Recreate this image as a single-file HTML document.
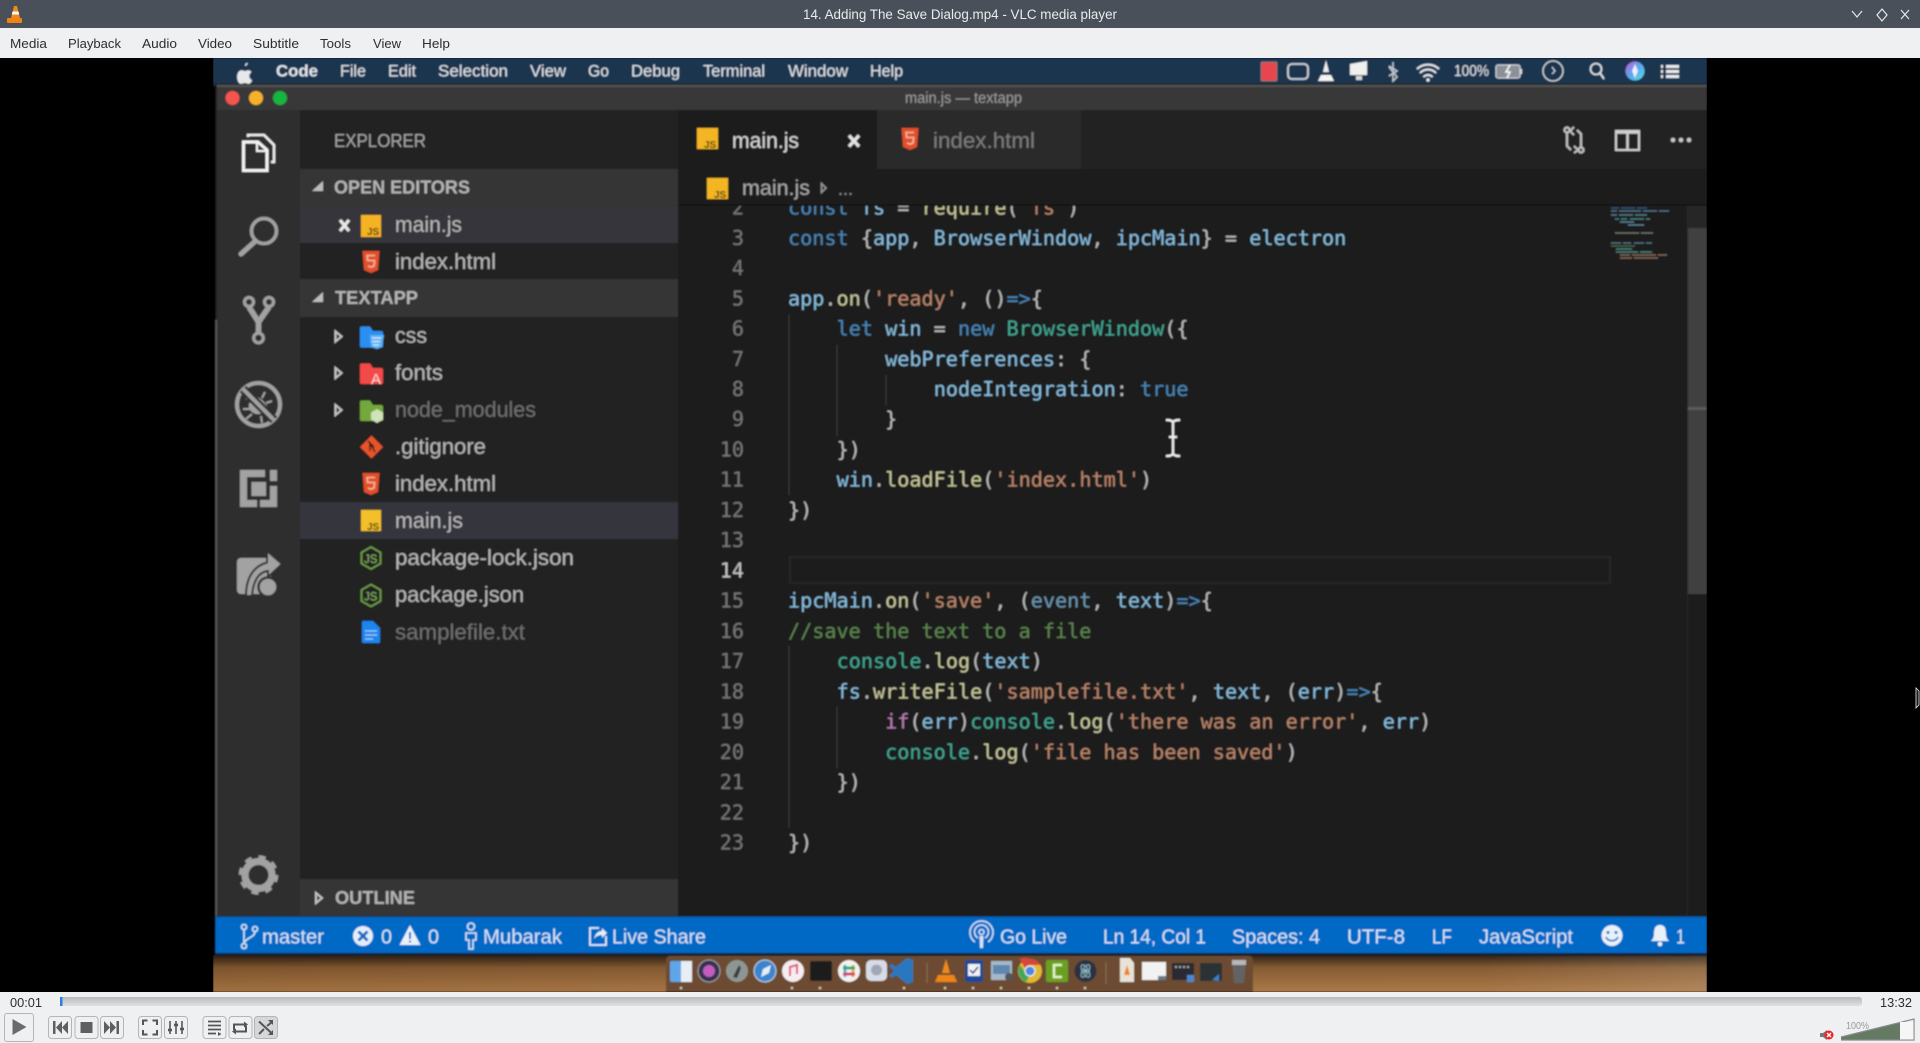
<!DOCTYPE html>
<html lang="en"><head><meta charset="utf-8"><title>14. Adding The Save Dialog.mp4 - VLC media player</title>
<style>
html,body{margin:0;padding:0;background:#000;overflow:hidden}
svg{display:block;position:absolute;left:0;top:0}
text{font-family:"Liberation Sans",sans-serif;white-space:pre}
.code text,.code{font-family:"DejaVu Sans Mono","Liberation Mono",monospace;font-size:20.16px}
.k{fill:#4a86b8}.v{fill:#88bedf}.p{fill:#bcbcbc}.m{fill:#c8c89c}.s{fill:#bb866c}.c{fill:#5c8650}.t{fill:#42a894}.f{fill:#b97fb5}.d{fill:#6a97b0}
.n{fill:#767676;text-anchor:end}
.side{font-size:22.4px;fill:#b8b8b8}
.dim{font-size:22.4px;fill:#707070}
.sb{font-size:20px;fill:#d5e6f7}
.mac{font-size:17px;fill:#e2e6ec}
.vm{font-size:13px;fill:#2a2e32}
.hd{font-size:18px;font-weight:bold;fill:#b4b4b4}
</style></head><body>
<svg width="1920" height="1043" viewBox="0 0 1920 1043" xmlns="http://www.w3.org/2000/svg">
<defs>
<filter id="b" filterUnits="userSpaceOnUse" x="213" y="58" width="1494" height="934"><feGaussianBlur stdDeviation="0.7"/></filter>
<clipPath id="vid"><rect x="213" y="58" width="1494" height="934"/></clipPath>
<clipPath id="ed"><rect x="678" y="206" width="1009" height="711"/></clipPath>
<linearGradient id="wall" x1="0" y1="0" x2="0" y2="1"><stop offset="0" stop-color="#2b1c10"/><stop offset=".35" stop-color="#84592f"/><stop offset="1" stop-color="#aa7644"/></linearGradient>
<linearGradient id="wallr" x1="0" y1="0" x2="1" y2="0"><stop offset="0" stop-color="#000" stop-opacity=".05"/><stop offset=".85" stop-color="#fff" stop-opacity=".02"/><stop offset="1" stop-color="#fff" stop-opacity=".13"/></linearGradient>
<linearGradient id="sl" x1="0" y1="0" x2="0" y2="1"><stop offset="0" stop-color="#b9babc"/><stop offset="1" stop-color="#dfe0e2"/></linearGradient>
<linearGradient id="siri" x1="0" y1="0" x2="1" y2="1"><stop offset="0" stop-color="#c55bd0"/><stop offset=".5" stop-color="#5aa8ef"/><stop offset="1" stop-color="#5ae0e0"/></linearGradient>
<symbol id="h5" viewBox="-10 -12 20 24" overflow="visible"><path d="M-8.5-11H8.5L7 8 0 11-7 8Z" fill="#e2502a"/><path d="M4-6.5H-3.8L-3.4-1.5H3.6L3 4 0 5.2-3 4" fill="none" stroke="#f0b8a0" stroke-width="1.6"/></symbol>
</defs>

<!-- VLC chrome -->
<rect x="0" y="0" width="1920" height="28" fill="#4a5059"/>
<rect x="0" y="28" width="1920" height="30" fill="#eff0f1"/>
<rect x="0" y="58" width="1920" height="934" fill="#000"/>
<path d="M14 6 17 6 20 18H11Z" fill="#f08a1c"/><path d="M12.6 11.5h5.8l.8 3H11.8Z" fill="#fff"/><rect x="7" y="18" width="15" height="5" rx="1" fill="#ef8414"/>
<text x="803" y="19" font-size="13.5" fill="#e9ebee" textLength="314" lengthAdjust="spacingAndGlyphs">14. Adding The Save Dialog.mp4 - VLC media player</text>
<path d="M1852 11l5 6 5-6" fill="none" stroke="#e6e8ea" stroke-width="1.2"/>
<path d="M1882 9l5 6-5 6-5-6Z" fill="none" stroke="#e6e8ea" stroke-width="1.2"/>
<path d="M1901 10l8 9M1909 10l-8 9" fill="none" stroke="#e6e8ea" stroke-width="1.2"/>
<g class="vmg">
<text class="vm" x="10" y="48" textLength="37" lengthAdjust="spacingAndGlyphs">Media</text>
<text class="vm" x="68" y="48" textLength="53" lengthAdjust="spacingAndGlyphs">Playback</text>
<text class="vm" x="142" y="48" textLength="35" lengthAdjust="spacingAndGlyphs">Audio</text>
<text class="vm" x="198" y="48" textLength="34" lengthAdjust="spacingAndGlyphs">Video</text>
<text class="vm" x="253" y="48" textLength="46" lengthAdjust="spacingAndGlyphs">Subtitle</text>
<text class="vm" x="320" y="48" textLength="31" lengthAdjust="spacingAndGlyphs">Tools</text>
<text class="vm" x="373" y="48" textLength="28" lengthAdjust="spacingAndGlyphs">View</text>
<text class="vm" x="422" y="48" textLength="28" lengthAdjust="spacingAndGlyphs">Help</text>
</g>

<!-- video -->
<g clip-path="url(#vid)"><g filter="url(#b)">
<rect x="213" y="58" width="1494" height="27" fill="#1e3550"/>
<rect x="213" y="83" width="1494" height="3" fill="#222a33"/>
<rect x="213" y="955" width="1494" height="37" fill="url(#wall)"/>
<rect x="213" y="955" width="1494" height="37" fill="url(#wallr)"/>
<!-- mac menu -->
<path d="M245 66c1.500-.2 2.500-1.300 2.700-3.200-1.600.2-2.800 1.400-2.700 3.200zm-6 17c-2-2.500-2.800-8-.5-11 1.500-1.900 3.600-2.200 5.200-1.200 1 .4 1.500.4 2.500 0 2-1 4-.5 5.300 1.300-3.300 2-2.800 6.700.6 8.100-.8 2-1.700 3-2.800 3.500-1.200.4-2 0-3-.4-1-.4-1.800-.4-2.800 0-1.800.8-3 .7-4.500-.3z" fill="#e8e8ea"/>
<text class="mac" x="276" y="76.500" font-weight="bold" textLength="42" lengthAdjust="spacingAndGlyphs">Code</text>
<text class="mac" x="340" y="76.500" textLength="26" lengthAdjust="spacingAndGlyphs">File</text>
<text class="mac" x="388" y="76.500" textLength="28" lengthAdjust="spacingAndGlyphs">Edit</text>
<text class="mac" x="438" y="76.500" textLength="70" lengthAdjust="spacingAndGlyphs">Selection</text>
<text class="mac" x="530" y="76.500" textLength="36" lengthAdjust="spacingAndGlyphs">View</text>
<text class="mac" x="588" y="76.500" textLength="21" lengthAdjust="spacingAndGlyphs">Go</text>
<text class="mac" x="631" y="76.500" textLength="49" lengthAdjust="spacingAndGlyphs">Debug</text>
<text class="mac" x="703" y="76.500" textLength="62" lengthAdjust="spacingAndGlyphs">Terminal</text>
<text class="mac" x="788" y="76.500" textLength="60" lengthAdjust="spacingAndGlyphs">Window</text>
<text class="mac" x="870" y="76.500" textLength="33" lengthAdjust="spacingAndGlyphs">Help</text>
<!-- mac right -->
<rect x="1261" y="62" width="16" height="19" rx="1" fill="#e8454f" stroke="#777" stroke-width="1"/>
<rect x="1288" y="64" width="20" height="15" rx="4" fill="none" stroke="#d0d4da" stroke-width="1.8"/>
<path d="M1326 60l3 12h-6z" fill="#eee"/><path d="M1321 75h10l3 6h-16z" fill="#f4f4f4"/>
<path d="M1350 64l17-3v14h-17z" fill="#f0f0f0"/><path d="M1356 76h6v4h-6z" fill="#d8d8d8"/>
<path d="M1389 66l8 5-8 5M1393 62v19l4-4-8-10" fill="none" stroke="#c8ccd2" stroke-width="1.4"/>
<path d="M1417 69a16 16 0 0 1 22 0M1420 73a11 11 0 0 1 16 0M1423.500 77a6 6 0 0 1 9 0" fill="none" stroke="#e6e8ee" stroke-width="2"/><circle cx="1428" cy="80" r="1.700" fill="#e6e8ee"/>
<text x="1454" y="76" font-size="15.500" fill="#dfe3e8" textLength="35" lengthAdjust="spacingAndGlyphs">100%</text>
<rect x="1496" y="65" width="24" height="13" rx="2" fill="#8a9098" stroke="#d8dce0"/><path d="M1510 65l-4 7h4l-3 6" fill="none" stroke="#fff" stroke-width="1.500"/><rect x="1520" y="69" width="2" height="5" fill="#d8dce0"/>
<circle cx="1553" cy="71" r="10" fill="none" stroke="#d8dce0" stroke-width="1.300"/><path d="M1552 67l3 4-3 3" fill="none" stroke="#d8dce0" stroke-width="1.100"/>
<circle cx="1596" cy="69" r="5.500" fill="none" stroke="#e2e6ea" stroke-width="1.600"/><path d="M1600 73l4 6" stroke="#e2e6ea" stroke-width="1.800"/>
<circle cx="1635" cy="71" r="9.500" fill="url(#siri)"/><path d="M1635 64l3 7-3 7-3-7z" fill="#eef"/>
<path d="M1661 65h2v3h-2zM1661 70h2v3h-2zM1661 75h2v3h-2z" fill="#e8eaee"/><path d="M1666 65h13v3h-13zM1666 70h13v3h-13zM1666 75h13v3h-13z" fill="#e8eaee"/>

<!-- window -->
<rect x="215" y="85" width="1492" height="870" fill="#1c1c1c"/>
<rect x="217" y="85" width="1490" height="25" fill="#383838"/>
<rect x="217" y="85" width="1490" height="2" fill="#555"/>
<rect x="215" y="320" width="2" height="600" fill="#5a5a5a"/>
<circle cx="232.500" cy="98" r="7" fill="#f5544d"/><circle cx="256" cy="98" r="7" fill="#f7b02c"/><circle cx="280" cy="98" r="7" fill="#17b53c"/>
<text x="905" y="103" font-size="15.500" fill="#9a9a9a" textLength="117" lengthAdjust="spacingAndGlyphs">main.js — textapp</text>

<!-- activity bar -->
<rect x="217" y="110" width="83" height="807" fill="#2e2e2e"/>
<path d="M248 137V135H264L274 145V162H271" fill="none" stroke="#f0f0f0" stroke-width="2.500"/>
<path d="M243.500 142H258L267 150V170.500H243.500Z" fill="none" stroke="#f4f4f4" stroke-width="3"/><path d="M257 143V151H266" fill="none" stroke="#f4f4f4" stroke-width="2"/>
<circle cx="264" cy="231" r="12.500" fill="none" stroke="#a2a2a2" stroke-width="3.500"/><path d="M255.500 241 241 254" stroke="#a2a2a2" stroke-width="5" stroke-linecap="round"/>
<g fill="none" stroke="#a2a2a2"><circle cx="249" cy="302" r="4.500" stroke-width="3.200"/><circle cx="269" cy="302" r="4.500" stroke-width="3.200"/><circle cx="258.500" cy="338" r="4.800" stroke-width="3.200"/><path d="M249 307 258.500 322 269 307M258.500 322V333" stroke-width="5.500"/></g>
<circle cx="258.500" cy="404.500" r="21.500" fill="none" stroke="#a2a2a2" stroke-width="4"/>
<g fill="none" stroke="#a2a2a2" stroke-width="2"><path d="M246 398l6 3M243 409h7M246 419l6-5M265 392l-3 6M272 401l-6 2M262 423l-1-7"/></g>
<path d="M252 398c5-3 11 1 15 8-2 6-6 9-11 8-6-2-8-6-7-10z" fill="#a2a2a2"/>
<path d="M243 389 274 420" stroke="#2e2e2e" stroke-width="9"/><path d="M243 389 274 420" stroke="#a2a2a2" stroke-width="4"/>
<path d="M240 470H265V477H247V500H257V507H240ZM260 500H270V486H277V507H260ZM270 470H277V481H270Z" fill="#a2a2a2"/><rect x="251.500" y="482" width="14.500" height="14" fill="#a2a2a2"/>
<rect x="237" y="558" width="34" height="36" rx="4" fill="#a2a2a2"/>
<path d="M246 596C246 577 254 566 267 562.500V551L282 564 268 577V571C258 572 253 582 252 596Z" fill="#a2a2a2" stroke="#2e2e2e" stroke-width="2"/>
<circle cx="268" cy="587" r="9.500" fill="#a2a2a2" stroke="#2e2e2e" stroke-width="2.500"/>
<g fill="none" stroke="#a2a2a2"><circle cx="258.500" cy="875" r="13.500" stroke-width="7"/><circle cx="258.500" cy="875" r="17" stroke-width="5.500" stroke-dasharray="6.600 6.750"/></g>

<!-- sidebar -->
<rect x="300" y="110" width="378" height="807" fill="#212121"/>
<text x="334" y="147" font-size="18.400" fill="#a4a4a4" textLength="92" lengthAdjust="spacingAndGlyphs">EXPLORER</text>
<rect x="300" y="169" width="378" height="38" fill="#343434"/>
<path d="M323 181v10h-11z" fill="#bcbcbc"/>
<text class="hd" x="334" y="193.500" textLength="136" lengthAdjust="spacingAndGlyphs">OPEN EDITORS</text>
<rect x="300" y="207" width="378" height="36" fill="#36363b"/>
<path d="M340 220l9 11M349 220l-9 11" stroke="#e8e8e8" stroke-width="3.200"/>
<rect x="361" y="215" width="20" height="22" fill="#f4b324"/><text x="367" y="235" font-size="10" font-weight="bold" fill="#4b3a10">JS</text>
<text class="side" x="395" y="232" textLength="67" lengthAdjust="spacingAndGlyphs">main.js</text>
<use href="#h5" x="361" y="250" width="20" height="24"/>
<text class="side" x="395" y="269" textLength="101" lengthAdjust="spacingAndGlyphs">index.html</text>
<rect x="300" y="279" width="378" height="38" fill="#343434"/>
<path d="M323 292v10h-11z" fill="#bcbcbc"/>
<text class="hd" x="335" y="304" textLength="83" lengthAdjust="spacingAndGlyphs">TEXTAPP</text>
<path d="M335.500 331.500l6 5-6 5z M335.500 368l6 5-6 5z M335.500 405l6 5-6 5z" fill="none" stroke="#c4c4c4" stroke-width="2"/>
<path d="M360 328a1.500 1.500 0 0 1 1.500-1.500H370L373 331H381a2 2 0 0 1 2 2v13a1.500 1.500 0 0 1-1.500 1.500H361.500a1.500 1.500 0 0 1-1.500-1.500Z" fill="#2b8ff0"/><path d="M370 335H384L382 347 377 349 371 347Z" fill="#5db2f7"/><path d="M372 338h9M372 341.500h8M373 345h6" stroke="#d5ecff" stroke-width="1.200"/>
<path d="M360 365a1.500 1.500 0 0 1 1.500-1.500H370L373 368H381a2 2 0 0 1 2 2v12.500a1.500 1.500 0 0 1-1.500 1.500H361.500a1.500 1.500 0 0 1-1.500-1.500Z" fill="#f24a48"/><text x="371" y="384" font-size="15" fill="#ffd6d0">A</text>
<path d="M360 402a1.500 1.500 0 0 1 1.500-1.500H370L373 405H381a2 2 0 0 1 2 2v12.500a1.500 1.500 0 0 1-1.500 1.500H361.500a1.500 1.500 0 0 1-1.500-1.500Z" fill="#73a83e"/><path d="M377 409l6 3.500v7l-6 3.500-6-3.500v-7z" fill="#cfe2b8"/>
<path d="M360 447l11.500-11.500L383 447l-11.500 11.500Z" fill="#e7532b"/><path d="M368 441l6 6M370 443v8M370 443l5 9" stroke="#2a1a15" stroke-width="1.400" fill="none"/>
<use href="#h5" x="361" y="472" width="20" height="24"/>
<rect x="300" y="502" width="378" height="37" fill="#36363d"/>
<rect x="361" y="510" width="20" height="21" fill="#f4c02c"/><text x="367" y="530" font-size="10" font-weight="bold" fill="#4b3a10">JS</text>
<path d="M371 547l9.500 5.500v11l-9.500 5.500-9.500-5.500v-11z" fill="none" stroke="#6ba046" stroke-width="1.800"/><text x="364" y="563" font-size="11.500" fill="#8fb86a">JS</text>
<path d="M371 584.500l9.500 5.500v11l-9.500 5.500-9.500-5.500v-11z" fill="none" stroke="#6ba046" stroke-width="1.800"/><text x="364" y="600.500" font-size="11.500" fill="#8fb86a">JS</text>
<path d="M362 622a1 1 0 0 1 1-1H373L380 628V642a1 1 0 0 1-1 1H363a1 1 0 0 1-1-1Z" fill="#1d85ee"/><path d="M365 631h12M365 635h12M365 639h8" stroke="#9fcdf7" stroke-width="1.300"/>
<text class="side" x="395" y="343" textLength="32" lengthAdjust="spacingAndGlyphs">css</text>
<text class="side" x="395" y="380" textLength="48" lengthAdjust="spacingAndGlyphs">fonts</text>
<text class="dim" x="395" y="417" textLength="141" lengthAdjust="spacingAndGlyphs">node_modules</text>
<text class="side" x="395" y="454" textLength="91" lengthAdjust="spacingAndGlyphs">.gitignore</text>
<text class="side" x="395" y="491" textLength="101" lengthAdjust="spacingAndGlyphs">index.html</text>
<text class="side" x="395" y="528" textLength="68" lengthAdjust="spacingAndGlyphs">main.js</text>
<text class="side" x="395" y="565" textLength="179" lengthAdjust="spacingAndGlyphs">package-lock.json</text>
<text class="side" x="395" y="602" textLength="129" lengthAdjust="spacingAndGlyphs">package.json</text>
<text class="dim" x="395" y="639.500" textLength="130" lengthAdjust="spacingAndGlyphs">samplefile.txt</text>
<rect x="300" y="879" width="378" height="38" fill="#343434"/>
<path d="M316 893l6 5-6 5z" fill="none" stroke="#c4c4c4" stroke-width="2"/>
<text class="hd" x="335" y="904" textLength="80" lengthAdjust="spacingAndGlyphs">OUTLINE</text>

<!-- tabs -->
<rect x="678" y="110" width="1029" height="59" fill="#232323"/>
<rect x="678" y="110" width="199" height="59" fill="#1c1c1c"/>
<rect x="877" y="110" width="204" height="59" fill="#2c2c2c"/>
<rect x="697" y="128" width="21" height="21" fill="#f3b524"/><text x="704" y="148" font-size="10" font-weight="bold" fill="#4b3a10">JS</text>
<text x="732" y="148" font-size="22.400" fill="#d8d8d8" textLength="67" lengthAdjust="spacingAndGlyphs">main.js</text>
<path d="M849 135.500l10 11M859 135.500l-10 11" stroke="#e4e4e4" stroke-width="3.200"/>
<use href="#h5" x="900" y="127" width="20" height="24"/>
<text x="933" y="148" font-size="22.400" fill="#7c7c7c" textLength="102" lengthAdjust="spacingAndGlyphs">index.html</text>
<g fill="none" stroke="#c0c0c0" stroke-width="2.200"><circle cx="1567" cy="130" r="2.500"/><circle cx="1581" cy="150" r="2.500"/><path d="M1567 133V146L1571 150M1581 147V134L1577 130"/><path d="M1574 127 1570 131 1574 135M1574 146 1578 150 1574 153" stroke-width="2"/></g>
<g fill="none" stroke="#d0d0d0"><rect x="1616" y="131" width="23" height="19" stroke-width="2"/><path d="M1627.500 131V150M1616 132.500H1639" stroke-width="2.500"/></g>
<circle cx="1673" cy="140" r="2.300" fill="#c8c8c8"/><circle cx="1681" cy="140" r="2.300" fill="#c8c8c8"/><circle cx="1689" cy="140" r="2.300" fill="#c8c8c8"/>
<!-- breadcrumb -->
<rect x="678" y="169" width="1029" height="37" fill="#1e1e1e"/>
<rect x="707" y="178" width="21" height="21" fill="#f3b524"/><text x="714" y="198" font-size="10" font-weight="bold" fill="#4b3a10">JS</text>
<text x="742" y="195" font-size="21.500" fill="#a8a8a8" textLength="68" lengthAdjust="spacingAndGlyphs">main.js</text>
<path d="M821.500 183.500l4.500 4.500-4.500 4.500z" fill="none" stroke="#9a9a9a" stroke-width="1.500"/>
<text x="838" y="195" font-size="19" fill="#8a8a8a" textLength="15" lengthAdjust="spacingAndGlyphs">...</text>
<rect x="678" y="204" width="1029" height="3" fill="#141414"/>

<!-- editor -->
<g clip-path="url(#ed)">
<rect x="678" y="206" width="1029" height="711" fill="#1c1c1c"/>
<rect x="790" y="557" width="820" height="26" fill="none" stroke="#282828" stroke-width="2"/>
<g stroke="#3a3a3a" stroke-width="1.300"><path d="M789 315V495M837 345V436M886 375V405M789 646V828M837 707V768"/></g>
<g class="code">
<text class="n" x="744" y="214.600" >2</text><text x="788" y="214.600"><tspan class="k">const</tspan> <tspan class="v">fs</tspan><tspan class="p"> = </tspan><tspan class="m">require</tspan><tspan class="p">(</tspan><tspan class="s">'fs'</tspan><tspan class="p">)</tspan></text>
<text class="n" x="744" y="244.800">3</text><text x="788" y="244.800"><tspan class="k">const</tspan><tspan class="p"> {</tspan><tspan class="v">app</tspan><tspan class="p">, </tspan><tspan class="v">BrowserWindow</tspan><tspan class="p">, </tspan><tspan class="v">ipcMain</tspan><tspan class="p">} = </tspan><tspan class="v">electron</tspan></text>
<text class="n" x="744" y="275">4</text>
<text class="n" x="744" y="305.300">5</text><text x="788" y="305.300"><tspan class="v">app</tspan><tspan class="p">.</tspan><tspan class="m">on</tspan><tspan class="p">(</tspan><tspan class="s">'ready'</tspan><tspan class="p">, ()</tspan><tspan class="k">=&gt;</tspan><tspan class="p">{</tspan></text>
<text class="n" x="744" y="335.500">6</text><text x="836.600" y="335.500"><tspan class="k">let</tspan> <tspan class="v">win</tspan><tspan class="p"> = </tspan><tspan class="k">new</tspan> <tspan class="t">BrowserWindow</tspan><tspan class="p">({</tspan></text>
<text class="n" x="744" y="365.800">7</text><text x="885.100" y="365.800"><tspan class="v">webPreferences</tspan><tspan class="p">: {</tspan></text>
<text class="n" x="744" y="396">8</text><text x="933.700" y="396"><tspan class="v">nodeIntegration</tspan><tspan class="p">: </tspan><tspan class="k">true</tspan></text>
<text class="n" x="744" y="426.200">9</text><text x="885.100" y="426.200" class="p">}</text>
<text class="n" x="744" y="456.500">10</text><text x="836.600" y="456.500" class="p">})</text>
<text class="n" x="744" y="486.700">11</text><text x="836.600" y="486.700"><tspan class="v">win</tspan><tspan class="p">.</tspan><tspan class="m">loadFile</tspan><tspan class="p">(</tspan><tspan class="s">'index.html'</tspan><tspan class="p">)</tspan></text>
<text class="n" x="744" y="517">12</text><text x="788" y="517" class="p">})</text>
<text class="n" x="744" y="547.200">13</text>
<text x="744" y="577.400" text-anchor="end" fill="#c4c4c4">14</text>
<text class="n" x="744" y="607.700">15</text><text x="788" y="607.700"><tspan class="v">ipcMain</tspan><tspan class="p">.</tspan><tspan class="m">on</tspan><tspan class="p">(</tspan><tspan class="s">'save'</tspan><tspan class="p">, (</tspan><tspan class="d">event</tspan><tspan class="p">, </tspan><tspan class="v">text</tspan><tspan class="p">)</tspan><tspan class="k">=&gt;</tspan><tspan class="p">{</tspan></text>
<text class="n" x="744" y="637.900">16</text><text x="788" y="637.900" class="c">//save the text to a file</text>
<text class="n" x="744" y="668.200">17</text><text x="836.600" y="668.200"><tspan class="t">console</tspan><tspan class="p">.</tspan><tspan class="m">log</tspan><tspan class="p">(</tspan><tspan class="v">text</tspan><tspan class="p">)</tspan></text>
<text class="n" x="744" y="698.400">18</text><text x="836.600" y="698.400"><tspan class="v">fs</tspan><tspan class="p">.</tspan><tspan class="m">writeFile</tspan><tspan class="p">(</tspan><tspan class="s">'samplefile.txt'</tspan><tspan class="p">, </tspan><tspan class="v">text</tspan><tspan class="p">, (</tspan><tspan class="v">err</tspan><tspan class="p">)</tspan><tspan class="k">=&gt;</tspan><tspan class="p">{</tspan></text>
<text class="n" x="744" y="728.600">19</text><text x="885.100" y="728.600"><tspan class="f">if</tspan><tspan class="p">(</tspan><tspan class="v">err</tspan><tspan class="p">)</tspan><tspan class="t">console</tspan><tspan class="p">.</tspan><tspan class="m">log</tspan><tspan class="p">(</tspan><tspan class="s">'there was an error'</tspan><tspan class="p">, </tspan><tspan class="v">err</tspan><tspan class="p">)</tspan></text>
<text class="n" x="744" y="758.900">20</text><text x="885.100" y="758.900"><tspan class="t">console</tspan><tspan class="p">.</tspan><tspan class="m">log</tspan><tspan class="p">(</tspan><tspan class="s">'file has been saved'</tspan><tspan class="p">)</tspan></text>
<text class="n" x="744" y="789.100">21</text><text x="836.600" y="789.100" class="p">})</text>
<text class="n" x="744" y="819.400">22</text>
<text class="n" x="744" y="849.600">23</text><text x="788" y="849.600" class="p">})</text>
</g>
</g>
<!-- minimap -->
<g>
<path d="M1611 208h8M1621 208h14M1637 208h10" stroke="#2e5a7e" stroke-width="1.200"/>
<path d="M1611 211h6M1619 211h22M1643 211h14M1659 211h10" stroke="#54788e" stroke-width="1.200"/>
<path d="M1611 215h6M1619 215h14M1635 215h12" stroke="#5d7f8e" stroke-width="1.200"/>
<path d="M1615 219h4M1621 219h6M1630 219h14M1646 219h4" stroke="#4a8a80" stroke-width="1.200"/>
<path d="M1620 222h14M1628 225h16" stroke="#5d8aa0" stroke-width="1.200"/>
<path d="M1615 233h4M1619 233h20M1641 233h12" stroke="#6e7a70" stroke-width="1.200"/>
<path d="M1611 243h10M1623 243h8M1634 243h10M1646 243h6" stroke="#56788c" stroke-width="1.200"/>
<path d="M1611 246h24" stroke="#4c6a48" stroke-width="1.200"/>
<path d="M1616 249h16M1616 252h22M1640 252h12" stroke="#4f8a82" stroke-width="1.200"/>
<path d="M1620 255h10M1632 255h24M1658 255h9M1620 258h12M1634 258h24" stroke="#8a6d5c" stroke-width="1.200"/>
</g>
<!-- scrollbar -->
<rect x="1687" y="206" width="20" height="711" fill="#1e1e1e"/>
<rect x="1687" y="206" width="1" height="711" fill="#2a2a2a"/>
<rect x="1688" y="206" width="19" height="22" fill="#262626"/>
<rect x="1688" y="228" width="19" height="366" fill="#414141"/>
<rect x="1688" y="407" width="19" height="3" fill="#5a5a5a"/>
<!-- cursor -->
<path d="M1166 420c3 0 5 0 7 2 2-2 4-2 7-2M1173 422V454M1166 456c3 0 5 0 7-2 2 2 4 2 7 2M1169 437h8" fill="none" stroke="#f2f2f2" stroke-width="2.200"/>

<!-- status bar -->
<rect x="215" y="917" width="1492" height="38" fill="#0067c5"/>
<rect x="215" y="953" width="1492" height="3" fill="#15222e"/>
<rect x="215" y="916" width="1492" height="1" fill="#103a60"/>
<g fill="none" stroke="#d5e6f7" stroke-width="1.600"><circle cx="244" cy="927" r="2.500"/><circle cx="244" cy="946" r="2.500"/><circle cx="255" cy="929" r="2.500"/><path d="M244 930V943M255 932C254 938 247 937 245 942"/></g>
<text class="sb" x="262" y="943.500" textLength="62" lengthAdjust="spacingAndGlyphs">master</text>
<circle cx="363" cy="936" r="10" fill="#e2eefa"/><path d="M358.500 931.500l9 9M367.500 931.500l-9 9" stroke="#0067c5" stroke-width="2.800"/>
<text class="sb" x="381" y="943.500" textLength="11" lengthAdjust="spacingAndGlyphs">0</text>
<path d="M410 925l10.500 20h-21z" fill="#e8f1fa"/><path d="M410 932v7M410 940.500v2" stroke="#0067c5" stroke-width="2"/>
<text class="sb" x="428" y="943.500" textLength="11" lengthAdjust="spacingAndGlyphs">0</text>
<circle cx="471" cy="926.500" r="3.500" fill="none" stroke="#d5e6f7" stroke-width="1.600"/><path d="M466 933h10v7h-3v9h-4v-9h-3z" fill="none" stroke="#d5e6f7" stroke-width="1.600"/>
<text class="sb" x="483" y="943.500" textLength="79" lengthAdjust="spacingAndGlyphs">Mubarak</text>
<path d="M599 928h-9v17h16v-9" fill="none" stroke="#e2eefa" stroke-width="1.800"/><path d="M594 939c1-5 4-8 8-8v-3l5 5-5 5v-3c-3 0-6 1-8 4z" fill="#e2eefa"/>
<text class="sb" x="612" y="943.500" textLength="94" lengthAdjust="spacingAndGlyphs">Live Share</text>
<g fill="none" stroke="#d5e6f7" stroke-width="1.500"><path d="M975 942a11.500 11.500 0 1 1 13 0M978 938a7 7 0 1 1 7 0"/><circle cx="981.500" cy="932" r="2.500"/></g><path d="M979.500 936h4l-.5 12h-3z" fill="#d5e6f7"/>
<text class="sb" x="1000" y="943.500" textLength="67" lengthAdjust="spacingAndGlyphs">Go Live</text>
<text class="sb" x="1103" y="943.500" textLength="103" lengthAdjust="spacingAndGlyphs">Ln 14, Col 1</text>
<text class="sb" x="1232" y="943.500" textLength="88" lengthAdjust="spacingAndGlyphs">Spaces: 4</text>
<text class="sb" x="1347" y="943.500" textLength="58" lengthAdjust="spacingAndGlyphs">UTF-8</text>
<text class="sb" x="1432" y="943.500" textLength="20" lengthAdjust="spacingAndGlyphs">LF</text>
<text class="sb" x="1479" y="943.500" textLength="94" lengthAdjust="spacingAndGlyphs">JavaScript</text>
<circle cx="1612" cy="935.500" r="10.500" fill="#e8f1fa"/><circle cx="1608" cy="932.500" r="1.500" fill="#0067c5"/><circle cx="1616" cy="932.500" r="1.500" fill="#0067c5"/><path d="M1606 937c2 5 10 5 12 0" fill="none" stroke="#0067c5" stroke-width="1.600"/>
<path d="M1660 925c5 0 6 4 6 9 0 3 1 5 3 7h-18c2-2 3-4 3-7 0-5 1-9 6-9z" fill="#e8f1fa"/><circle cx="1660" cy="944" r="2.300" fill="#e8f1fa"/>
<text class="sb" x="1676" y="943.500" textLength="9" lengthAdjust="spacingAndGlyphs">1</text>

<!-- dock -->
<path d="M666 992V960a4 4 0 0 1 4-4H1249a4 4 0 0 1 4 4V992Z" fill="#6c4b30"/>
<rect x="670" y="961" width="22" height="21" rx="2" fill="#5fa6e8"/><rect x="681" y="961" width="11" height="21" fill="#e8eef4"/>
<circle cx="709" cy="971" r="11" fill="#35304e" stroke="#a8a6aa"/><circle cx="709" cy="971" r="6" fill="#c45cc0"/>
<circle cx="737" cy="971" r="11" fill="#8e9694"/><path d="M733 977l6-12 2 3-4 10z" fill="#3a3e40"/>
<circle cx="765" cy="971" r="11" fill="#3a85d0" stroke="#c8d4e0"/><path d="M771 965l-8 4-2 8 8-4z" fill="#e8eef4"/>
<circle cx="793" cy="971" r="11" fill="#f4eef0"/><path d="M790 976v-9l7-2v9" fill="none" stroke="#e84a7a" stroke-width="2"/>
<rect x="810" y="961" width="22" height="20" rx="2" fill="#1e1e1e"/>
<circle cx="849" cy="971" r="11" fill="#f2f2f0"/><path d="M845 965v12" stroke="#3ab5d8" stroke-width="3"/><path d="M853 965v12" stroke="#e0b030" stroke-width="3"/><path d="M843 968h12" stroke="#2ea870" stroke-width="3"/><path d="M843 974h12" stroke="#d84070" stroke-width="3"/>
<rect x="866" y="960" width="21" height="21" rx="5" fill="#d8dce6"/><circle cx="876.500" cy="970" r="5.500" fill="#a0a8b8"/>
<path d="M913 960v22l-6 2-11-9-4 3-3-2 5-5-5-5 3-2 4 3 11-9z" fill="#2a77c0"/>
<rect x="926.500" y="963" width="1" height="20" fill="#8a7050"/>
<path d="M946 959l4 14h-8z" fill="#ee8a1a"/><path d="M938 975h16l3 7h-22z" fill="#ef8414"/>
<rect x="965" y="960" width="18" height="22" rx="2" fill="#1e4a9a"/><rect x="968" y="964" width="12" height="12" fill="#f2f2f2"/><path d="M970 970l3 3 5-6" fill="none" stroke="#1e3a80" stroke-width="1.500"/>
<rect x="991" y="961" width="21" height="19" fill="#a6b8c8"/><rect x="993" y="965" width="17" height="9" fill="#5f88b0"/><circle cx="1009" cy="977" r="4" fill="#555"/>
<circle cx="1030" cy="971" r="12" fill="#e2b832"/><path d="M1030 959a12 12 0 0 1 10.400 6H1030a6 6 0 0 0-5 3l-5.500-9a12 12 0 0 1 10.500 0z" fill="#d8443a"/><path d="M1020 965a12 12 0 0 0 6 17l4-7a5 5 0 0 1-5-3z" fill="#3ea85a"/><circle cx="1030" cy="971" r="5" fill="#4a8ae0" stroke="#eee" stroke-width="1.200"/>
<rect x="1046" y="960" width="22" height="22" rx="2" fill="#6aa020"/><path d="M1062 965h-8v12h8" fill="none" stroke="#e4f2c8" stroke-width="2.500"/>
<circle cx="1085.500" cy="971" r="11" fill="#2a3040"/><circle cx="1085.500" cy="971" r="2" fill="#8fb8c8"/><ellipse cx="1085.500" cy="971" rx="7" ry="3" fill="none" stroke="#8fb8c8" transform="rotate(60 1085.500 971)"/><ellipse cx="1085.500" cy="971" rx="7" ry="3" fill="none" stroke="#8fb8c8" transform="rotate(-60 1085.500 971)"/>
<rect x="1105.500" y="962" width="1" height="22" fill="#8a7050"/>
<path d="M1120 958h10l4 5v19h-14z" fill="#e8e2d8"/><path d="M1127 965l3 10h-6z" fill="#ef8414"/>
<rect x="1142" y="962" width="24" height="18" fill="#f2f2f2"/><rect x="1158" y="976" width="8" height="4" fill="#6a7a88"/>
<rect x="1172" y="963" width="22" height="17" fill="#2c2c30"/><path d="M1175 967h16" stroke="#aaa" stroke-dasharray="2 2" stroke-width="2"/><rect x="1187" y="975" width="7" height="7" fill="#4a88d0"/>
<rect x="1200" y="963" width="22" height="18" fill="#2c3034"/><path d="M1212 980l7-6v7z" fill="#3a80c8"/>
<path d="M1232 960h14l-2 23h-10z" fill="#646464"/><path d="M1232 960h14v5h-14z" fill="#b8b8b8"/>
<g fill="#d8c8b0"><circle cx="681" cy="988" r="1.300"/><circle cx="792" cy="988" r="1.300"/><circle cx="820" cy="988" r="1.300"/><circle cx="904" cy="988" r="1.300"/><circle cx="945" cy="988" r="1.300"/><circle cx="973" cy="988" r="1.300"/><circle cx="1001" cy="988" r="1.300"/><circle cx="1029" cy="988" r="1.300"/><circle cx="1057" cy="988" r="1.300"/><circle cx="1085" cy="988" r="1.300"/></g>
</g></g>

<!-- VLC controls -->
<rect x="0" y="992" width="1920" height="51" fill="#eff0f1"/>
<rect x="60" y="997" width="1802" height="9" rx="3" fill="url(#sl)"/>
<rect x="60" y="997" width="2.500" height="9" fill="#2b7fe0"/>
<text x="10" y="1007" font-size="13" fill="#2a2e32" textLength="32" lengthAdjust="spacingAndGlyphs">00:01</text>
<text x="1880" y="1007" font-size="13" fill="#2a2e32" textLength="32" lengthAdjust="spacingAndGlyphs">13:32</text>
<g fill="#eff0f1" stroke="#b4b5b8"><rect x="4.500" y="1013.500" width="29" height="28" rx="2.500"/><rect x="48.500" y="1016.500" width="23" height="22" rx="3"/><rect x="75" y="1016.500" width="23" height="22" rx="3"/><rect x="100.500" y="1016.500" width="23" height="22" rx="3"/><rect x="138.500" y="1016.500" width="23" height="22" rx="3"/><rect x="164.500" y="1016.500" width="23" height="22" rx="3"/><rect x="203" y="1016.500" width="23" height="22" rx="3"/><rect x="229" y="1016.500" width="23" height="22" rx="3"/><rect x="254.500" y="1016.500" width="23" height="22" rx="3" fill="#d6d7d9"/></g>
<path d="M12.500 1019v16l14-8z" fill="#6a6b6d"/>
<path d="M53 1021h2.500v13H53zM62 1021v13l-6-6.500zM68 1021v13l-6-6.500z" fill="#5e5f61"/>
<rect x="80.500" y="1022" width="12" height="11" fill="#5e5f61"/>
<path d="M119 1021h-2.500v13h2.500zM110 1021v13l6-6.500zM104 1021v13l6-6.500z" fill="#5e5f61"/>
<path d="M143 1025v-4.500h4.500M152.500 1020.500h4.500v4.500M143 1030v4.500h4.500M152.500 1034.500h4.500V1030" fill="none" stroke="#555" stroke-width="2"/>
<path d="M170 1021v13M176 1021v13M182 1021v13" stroke="#555" stroke-width="1.600"/><path d="M168 1030h4M174 1025h4M180 1029h4" stroke="#555" stroke-width="2.600"/>
<path d="M208 1021.500h13M208 1025.500h13M208 1029.500h13M208 1033.500h8" stroke="#555" stroke-width="1.800"/><path d="M218 1032v4l3.500-2z" fill="#555"/>
<path d="M234 1030v-5.500h12M246 1026v5.500h-12" fill="none" stroke="#555" stroke-width="2"/><path d="M244 1021.500l4 3-4 3zM236 1028.500l-4 3 4 3z" fill="#555"/>
<path d="M259 1021.500l13 12M259 1034l5-5M267 1026l5-4" fill="none" stroke="#555" stroke-width="2"/><path d="M268 1020h5v5zM268 1035h5v-5z" fill="#555"/>
<!-- volume -->
<path d="M1820 1033h3l4-3v10l-4-3h-3z" fill="#787878"/><circle cx="1829" cy="1035" r="4.500" fill="#e8242a"/><path d="M1827 1033l4 4M1831 1033l-4 4" stroke="#fff" stroke-width="1.400"/>
<path d="M1841 1040H1900V1022.500L1841 1037Z" fill="#647a63"/>
<path d="M1841 1040H1914V1019L1841 1037" fill="none" stroke="#8a8b8d" stroke-width="1.200"/>
<rect x="1900" y="1022" width="13.500" height="17.500" fill="#f6f6f6"/>
<text x="1846" y="1029" font-size="10" fill="#9a9b9d" textLength="23" lengthAdjust="spacingAndGlyphs">100%</text>
<!-- desktop cursor -->
<path d="M1916 688l3 3v14l-3 3z" fill="#1a1a1a" stroke="#eee" stroke-width=".8"/>
</svg>
</body></html>
